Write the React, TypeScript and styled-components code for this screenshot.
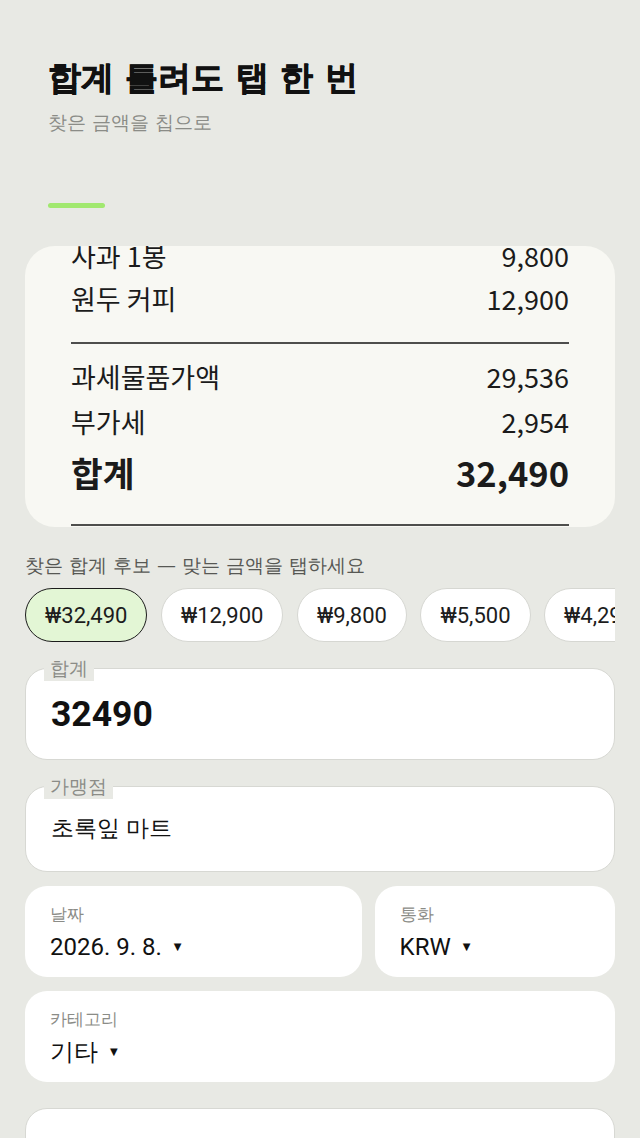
import React from "react";
import styled, { createGlobalStyle } from "styled-components";

const KOR = `"DejaVu Sans", sans-serif`;
const NUM = `Roboto, "DejaVu Sans", sans-serif`;
const RECEIPT = `"Noto Sans CJK KR", sans-serif`;

const GlobalStyle = createGlobalStyle`
  html, body {
    margin: 0;
    padding: 0;
    background: #e8e9e4;
  }
  body {
    font-family: ${NUM};
    color: #111;
  }
  * { box-sizing: border-box; }
`;

const Page = styled.div`
  width: 640px;
  min-height: 1138px;
  overflow: hidden;
  padding: 0 25px;
  background: #e8e9e4;
`;

const Header = styled.header`
  padding: 58px 23px 0;
`;

const Title = styled.h1`
  margin: 0;
  font-family: ${KOR};
  font-weight: 700;
  font-size: 33px;
  line-height: 40px;
  color: #111;
  -webkit-text-stroke: 0.8px #111;
`;

const Subtitle = styled.p`
  margin: 12px 0 0;
  font-family: ${KOR};
  font-size: 18.6px;
  line-height: 26px;
  color: #8b8c87;
`;

const AccentBar = styled.div`
  margin-top: 67px;
  width: 57px;
  height: 5px;
  border-radius: 3px;
  background: #a1e86f;
`;

const Receipt = styled.section`
  margin-top: 38px;
  height: 281px;
  border-radius: 30px;
  background: #f8f8f3;
  overflow: hidden;
`;

const ReceiptScroll = styled.div`
  margin-top: -12px;
  padding: 0 46px;
  font-family: ${RECEIPT};
  color: #1b1b1b;
`;

const Row = styled.div<{ $h: number; $total?: boolean }>`
  display: flex;
  justify-content: space-between;
  align-items: center;
  height: ${(p) => p.$h}px;
  font-size: ${(p) => (p.$total ? 34.5 : 27)}px;
  font-weight: ${(p) => (p.$total ? 700 : 400)};
`;

const Rule = styled.div<{ $mt: number; $mb?: number }>`
  height: 2px;
  background: #4e4e4c;
  margin-top: ${(p) => p.$mt}px;
  margin-bottom: ${(p) => p.$mb ?? 0}px;
`;

const CandidatesLabel = styled.div`
  margin-top: 25px;
  font-family: ${KOR};
  font-size: 19px;
  line-height: 26px;
  color: #575854;
`;

const ChipRow = styled.div`
  margin-top: 10px;
  display: flex;
  gap: 13.5px;
  overflow: hidden;
`;

const Chip = styled.button<{ $active?: boolean }>`
  flex: none;
  height: 54px;
  padding: 0 19px;
  border-radius: 27px;
  border: ${(p) => (p.$active ? "1.5px solid #1c1c1c" : "1px solid #d6d7d2")};
  background: ${(p) => (p.$active ? "#e3f6d5" : "#ffffff")};
  font-family: Roboto, sans-serif;
  font-size: 22px;
  color: #1c1c1c;
`;

const Form = styled.div`
  margin-top: 14px;
  display: flex;
  flex-direction: column;
  gap: 14px;
`;

const Field = styled.div`
  position: relative;
  margin-top: 12px;
  padding: 24px 25px;
  border: 1.5px solid #d7d8d3;
  border-radius: 22px;
  background: #fff;
`;

const Legend = styled.span`
  position: absolute;
  top: -14px;
  left: 18px;
  padding: 0 6px;
  background: #e8e9e4;
  font-family: ${KOR};
  font-size: 19px;
  line-height: 26px;
  color: #8b8c87;
`;

const BigValue = styled.div`
  font-family: Roboto, sans-serif;
  font-weight: 700;
  font-size: 35.5px;
  line-height: 42px;
  color: #111;
`;

const TextValue = styled.div`
  font-family: ${NUM};
  font-size: 23px;
  line-height: 36px;
  color: #111;
`;

const SelectGrid = styled.div`
  display: grid;
  grid-template-columns: 7fr 5fr;
  gap: 13px;
`;

const SelectCard = styled.div`
  height: 91px;
  padding: 18px 25px 0;
  border-radius: 22px;
  background: #fff;
`;

const SmallLabel = styled.div`
  font-family: ${KOR};
  font-size: 16.5px;
  line-height: 22px;
  color: #8b8c87;
`;

const SelectValue = styled.div`
  margin-top: 5px;
  display: flex;
  align-items: center;
  gap: 12px;
  font-family: ${NUM};
  font-size: 24px;
  line-height: 32px;
  color: #111;
`;

const Caret = styled.span`
  font-size: 10px;
  line-height: 1;
  color: #111;
`;

const EmptyField = styled.div`
  margin-top: 12px;
  height: 90px;
  border: 1.5px solid #d7d8d3;
  border-radius: 22px;
  background: #fff;
`;

const items = [
  { label: "사과 1봉", value: "9,800" },
  { label: "원두 커피", value: "12,900" },
];

const chips = ["₩32,490", "₩12,900", "₩9,800", "₩5,500", "₩4,290", "₩2,954"];

export default function App() {
  return (
    <>
      <GlobalStyle />
      <Page>
        <Header>
          <Title>합계 틀려도 탭 한 번</Title>
          <Subtitle>찾은 금액을 칩으로</Subtitle>
          <AccentBar />
        </Header>

        <Receipt>
          <ReceiptScroll>
            {items.map((it) => (
              <Row key={it.label} $h={43}>
                <span>{it.label}</span>
                <span>{it.value}</span>
              </Row>
            ))}
            <Rule $mt={22} $mb={10} />
            <Row $h={45}>
              <span>과세물품가액</span>
              <span>29,536</span>
            </Row>
            <Row $h={45}>
              <span>부가세</span>
              <span>2,954</span>
            </Row>
            <Row $h={56} $total>
              <span>합계</span>
              <span>32,490</span>
            </Row>
            <Rule $mt={24} />
          </ReceiptScroll>
        </Receipt>

        <CandidatesLabel>찾은 합계 후보 — 맞는 금액을 탭하세요</CandidatesLabel>
        <ChipRow>
          {chips.map((c, i) => (
            <Chip key={c} $active={i === 0}>
              {c}
            </Chip>
          ))}
        </ChipRow>

        <Form>
          <Field>
            <Legend>합계</Legend>
            <BigValue>32490</BigValue>
          </Field>
          <Field>
            <Legend>가맹점</Legend>
            <TextValue>초록잎 마트</TextValue>
          </Field>
          <SelectGrid>
            <SelectCard>
              <SmallLabel>날짜</SmallLabel>
              <SelectValue>
                2026. 9. 8.
                <Caret>▼</Caret>
              </SelectValue>
            </SelectCard>
            <SelectCard>
              <SmallLabel>통화</SmallLabel>
              <SelectValue>
                KRW
                <Caret>▼</Caret>
              </SelectValue>
            </SelectCard>
          </SelectGrid>
          <SelectCard>
            <SmallLabel>카테고리</SmallLabel>
            <SelectValue>
              기타
              <Caret>▼</Caret>
            </SelectValue>
          </SelectCard>
          <EmptyField />
        </Form>
      </Page>
    </>
  );
}
